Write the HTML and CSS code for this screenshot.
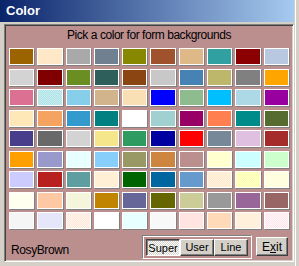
FILE: index.html
```html
<!DOCTYPE html>
<html lang="en">
  <head>
    <meta charset="UTF-8" />
    <title>Color</title>
    <link rel="stylesheet" href="styles.css">
  </head>
  <body>
    <div class="window">
      <div class="titlebar">Color</div>
      <div class="client">
        <div class="prompt">Pick a color for form backgrounds</div>
        <div class="swatches" id="swatches"></div>
        <div class="footer">
          <span class="current" id="current">RosyBrown</span>
          <div class="group">
            <button class="btn pressed">Super</button>
            <button class="btn">User</button>
            <button class="btn">Line</button>
          </div>
          <button class="btn exit">E<u>x</u>it</button>
        </div>
      </div>
    </div>

    <script>
      // "a|b" means a dithered mix of two colours
      const colors = [
        "#9c6400", "#ffe8c8", "#a9a9a9", "#708090", "#888800", "#a0522d", "#deb887", "#30a0a0", "#8b0000", "#b8c8e0",
        "#d3d3d3", "#800000", "#6b8e23", "#2f5f5a", "#8b4513", "#c8c8c8", "#4682b4", "#bdb76b", "#808080", "#ffa500",
        "#db7093", "#b0e0e6|#c8f0f0", "#87ceeb", "#d2b48c", "#f8dfb4", "#0000ff", "#8fbc8f", "#00bfff", "#add8e6", "#9900a0",
        "#ffe8b8", "#f4a460", "#339acd", "#008080", "#ffffff", "#a0d0d0", "#990066", "#ff7f50", "#008b8b", "#556b2f",
        "#483d8b", "#696969", "#d3d3d3", "#f5e68c", "#2e9b60", "#0000a0", "#ff0000", "#778899", "#e0c0e0", "#a52a2a",
        "#ffa000", "#9999cc", "#e8ffff", "#87cefa", "#999966", "#cd853f", "#bc8f8f", "#ffffd0", "#ccffff", "#ccffcc",
        "#ccccff", "#b82020", "#5f9ea0", "#ffefd5", "#006400", "#0066a0", "#6699cc", "#ffe8cc|#fff4e0", "#ffff99|#ffffe0", "#ffffe0",
        "#fffff0", "#ffc8a4", "#f5f5dc", "#c08400", "#666699", "#666600", "#cccc99", "#999999", "#996699", "#996666",
        "#f5f5f5", "#e6e6fa", "#ffe4d8|#fff8f0", "#ffffff", "#e8ffff", "#f8f8f8", "#ffe4e1", "#ffdab9", "#fff0dc", "#fff8f8|#ffe4ec"
      ];

      const grid = document.getElementById("swatches");
      colors.forEach((c) => {
        const sw = document.createElement("div");
        sw.className = "swatch";
        if (c.includes("|")) {
          const [a, b] = c.split("|");
          sw.style.background = `repeating-conic-gradient(${a} 0 25%, ${b} 0 50%) 0 0 / 2px 2px`;
        } else {
          sw.style.background = c;
        }
        grid.appendChild(sw);
      });
    </script>
  </body>
</html>
```

FILE: styles.css
```css
* {
  margin: 0;
  padding: 0;
  box-sizing: border-box;
}

body {
  width: 299px;
  height: 266px;
  overflow: hidden;
  font-family: "Liberation Sans", Arial, sans-serif;
  background-color: #d4d0c8;
}

.window {
  width: 299px;
  height: 266px;
  display: flex;
  flex-direction: column;
  background-color: #d4d0c8;
  box-shadow: inset -3px 0 0 #d4d0c8, inset -4px 0 0 #fff;
}

.titlebar {
  height: 22px;
  width: 294px;
  padding: 2px 0 0 6px;
  line-height: 18px;
  font-size: 13px;
  font-weight: bold;
  color: #fff;
  background: linear-gradient(to right, #0a246a, #a6caf0);
}

.client {
  flex: 1;
  margin: 2px 5px 4px 4px;
  padding: 0 4px 0 4px;
  display: flex;
  flex-direction: column;
  background-color: #bc8f8f;
  border: 1px solid;
  border-color: #808080 #fff #fff #808080;
  box-shadow: inset 1px 1px 0 #404040, inset -1px -1px 0 #d4d0c8;
}

.prompt {
  height: 23px;
  padding-top: 1px;
  line-height: 18px;
  font-size: 12px;
  letter-spacing: -0.45px;
  text-align: center;
  color: #000;
}

.swatches {
  display: grid;
  grid-template-columns: repeat(10, 1fr);
  grid-auto-rows: 17px;
  column-gap: 3px;
  row-gap: 3.5px;
  height: 181px;
}

.swatch {
  border: 1px solid #fff;
  box-shadow: 1px 1px 0 #808080;
}

.footer {
  flex: 1;
  display: flex;
  align-items: center;
  padding-top: 3px;
}

.current {
  margin-left: 2px;
  margin-top: 7px;
  font-size: 12px;
  letter-spacing: -0.4px;
  color: #000;
}

.group {
  margin-left: auto;
  display: flex;
  padding: 3px 3px 2px 3px;
  border: 1px solid;
  border-color: #808080 #fff #fff #808080;
  box-shadow: inset 1px 1px 0 #fff;
}

.btn {
  height: 17px;
  width: 34px;
  font-family: "Liberation Sans", Arial, sans-serif;
  font-size: 11px;
  color: #000;
  background-color: #d4d0c8;
  border: 1px solid;
  border-color: #fff #404040 #404040 #fff;
  box-shadow: inset -1px -1px 0 #808080;
}

.btn.pressed {
  padding-top: 1px;
  border-color: #404040 #fff #fff #404040;
  box-shadow: inset 1px 1px 0 #808080;
  background: repeating-conic-gradient(#fff 0 25%, #d4d0c8 0 50%) 0 0 / 2px 2px;
}

.btn.exit {
  width: 32px;
  height: 19px;
  margin: 0 1px 0 4px;
  font-size: 12px;
}
```
